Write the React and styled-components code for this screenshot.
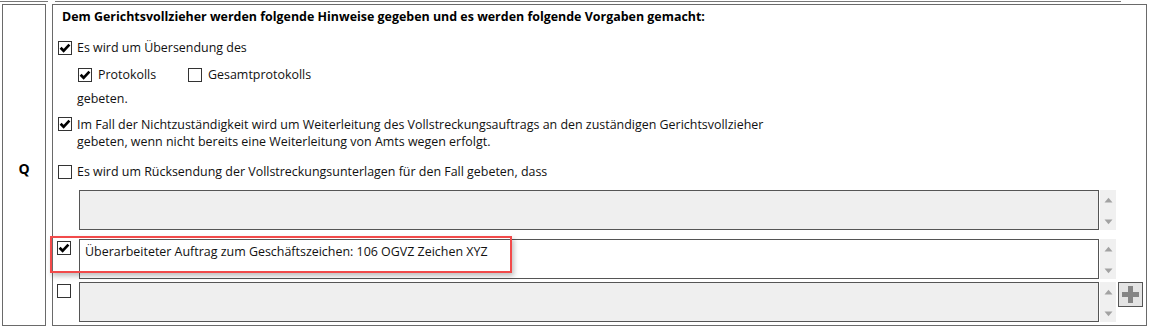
import React from "react";
import styled, { createGlobalStyle } from "styled-components";

const Global = createGlobalStyle`
  html, body { margin: 0; padding: 0; background: #fff; }
  body { font-family: "Open Sans", "Noto Sans", sans-serif; font-size: 12.45px; color: #111; }
`;

const Page = styled.div`
  position: relative;
  width: 1150px;
  height: 329px;
  overflow: hidden;
`;

const TopRules = styled.div`
  display: flex;
  height: 1px;
  margin-top: 1px;
`;

const Rule = styled.div`
  height: 1px;
  background: #777;
  margin-left: ${(p) => p.$ml || 0}px;
  width: ${(p) => p.$w}px;
`;

const Row = styled.div`
  display: flex;
  margin-top: 2px;
  margin-left: 2px;
  gap: 6px;
`;

const LabelCell = styled.div`
  box-sizing: border-box;
  width: 44px;
  height: 322px;
  border: 1px solid #6a6a6a;
  display: flex;
  align-items: center;
  justify-content: center;
  padding-top: 7px;
  font-weight: 700;
  font-size: 14px;
  color: #000;
`;

const Panel = styled.div`
  box-sizing: border-box;
  width: 1095px;
  height: 322px;
  border: 1px solid #6a6a6a;
  padding: 4px 0 0 4px;
  display: flex;
  flex-direction: column;
`;

const Header = styled.div`
  font-weight: 700;
  line-height: 16px;
  margin-left: 5px;
  color: #000;
`;

const CheckLine = styled.div`
  display: flex;
  align-items: ${(p) => (p.$top ? "flex-start" : "center")};
  gap: 5px;
  margin-top: ${(p) => p.$mt || 0}px;
  margin-left: ${(p) => p.$ml || 0}px;
  line-height: ${(p) => p.$lh || 16}px;
`;

const Item = styled.div`
  display: flex;
  align-items: center;
  gap: 6px;
  width: ${(p) => (p.$w ? `${p.$w}px` : "auto")};
`;

const Box = styled.div`
  box-sizing: border-box;
  width: 14px;
  height: 14px;
  flex: none;
  border: 1px solid #333;
  background: #fff;
  display: flex;
  align-items: center;
  justify-content: center;
  margin-top: ${(p) => p.$mt || 0}px;
`;

const Text = styled.div`
  white-space: nowrap;
`;

const Plain = styled.div`
  margin-top: ${(p) => p.$mt || 0}px;
  margin-left: ${(p) => p.$ml || 0}px;
  line-height: 16px;
`;

const FieldRow = styled.div`
  display: flex;
  align-items: flex-start;
  margin-top: ${(p) => p.$mt}px;
  height: 40px;
`;

const CbSlot = styled.div`
  width: 22px;
  flex: none;
  padding-top: 2px;
`;

const Area = styled.div`
  box-sizing: border-box;
  width: 1020px;
  height: 40px;
  border: 1px solid #555;
  background: ${(p) => (p.$white ? "#fff" : "#efefef")};
  padding: 4px 5px;
  line-height: 16px;
  color: #111;
`;

const Scroll = styled.div`
  width: 16px;
  height: 40px;
  margin-left: 1px;
  background: #f0f0f0;
  display: flex;
  flex-direction: column;
  justify-content: space-between;
  align-items: center;
  padding: 7px 0 5px;
  box-sizing: border-box;
`;

const PlusSlot = styled.div`
  width: 25px;
  margin-left: 2px;
`;

const PlusButton = styled.div`
  box-sizing: border-box;
  width: 25px;
  height: 25px;
  border: 1px solid #555;
  background: #e4e4e4;
  display: flex;
  align-items: center;
  justify-content: center;
`;

const Highlight = styled.div`
  position: absolute;
  left: 50px;
  top: 236px;
  width: 462px;
  height: 37px;
  box-sizing: border-box;
  border: 2px solid #f24a4a;
  box-shadow: 2px 3px 5px rgba(0, 0, 0, 0.25);
  pointer-events: none;
`;

const Check = ({ on, mt }) => (
  <Box $mt={mt}>
    {on && (
      <svg width="12" height="12" viewBox="0 0 12 12">
        <path d="M1.6 5.8 L4.6 8.8 L10.4 2.6" fill="none" stroke="#000" strokeWidth="2.7" />
      </svg>
    )}
  </Box>
);

const Arrow = ({ up }) => (
  <svg width="9" height="6" viewBox="0 0 9 6">
    <path d={up ? "M0.5 5.5 L4.5 0.8 L8.5 5.5Z" : "M0.5 0.5 L8.5 0.5 L4.5 5.2Z"} fill="#a2a2a2" />
  </svg>
);

const Field = ({ mt, cb, on, white, text, plus }) => (
  <FieldRow $mt={mt}>
    <CbSlot>{cb && <Check on={on} />}</CbSlot>
    <Area $white={white}>{text}</Area>
    <Scroll>
      <Arrow up />
      <Arrow />
    </Scroll>
    <PlusSlot>
      {plus && (
        <PlusButton>
          <svg width="21" height="21" viewBox="0 0 21 21" style={{ filter: "blur(0.6px)" }}>
            <path d="M10.5 2 V19 M2 10.5 H19" stroke="#858585" strokeWidth="5" />
          </svg>
        </PlusButton>
      )}
    </PlusSlot>
  </FieldRow>
);

export default function App() {
  return (
    <Page>
      <Global />
      <TopRules>
        <Rule $w={48} />
        <Rule $ml={7} $w={1066} />
      </TopRules>
      <Row>
        <LabelCell>Q</LabelCell>
        <Panel>
          <Header>
            Dem Gerichtsvollzieher werden folgende Hinweise gegeben und es werden folgende Vorgaben gemacht:
          </Header>
          <CheckLine $mt={15} $ml={1}>
            <Check on />
            <Text>Es wird um Übersendung des</Text>
          </CheckLine>
          <CheckLine $mt={11} $ml={21}>
            <Item $w={105}>
              <Check on />
              <Text>Protokolls</Text>
            </Item>
            <Item>
              <Check />
              <Text>Gesamtprotokolls</Text>
            </Item>
          </CheckLine>
          <Plain $mt={8} $ml={20}>gebeten.</Plain>
          <CheckLine $mt={9} $ml={1} $top $lh={17}>
            <Check on mt={1} />
            <Text>
              Im Fall der Nichtzuständigkeit wird um Weiterleitung des Vollstreckungsauftrags an den zuständigen Gerichtsvollzieher
              <br />
              gebeten, wenn nicht bereits eine Weiterleitung von Amts wegen erfolgt.
            </Text>
          </CheckLine>
          <CheckLine $mt={14} $ml={1}>
            <Check />
            <Text>Es wird um Rücksendung der Vollstreckungsunterlagen für den Fall gebeten, dass</Text>
          </CheckLine>
          <Field mt={10} />
          <Field mt={9} cb on white text="Überarbeiteter Auftrag zum Geschäftszeichen: 106 OGVZ Zeichen XYZ" />
          <Field mt={3} cb plus />
        </Panel>
      </Row>
      <Highlight />
    </Page>
  );
}
